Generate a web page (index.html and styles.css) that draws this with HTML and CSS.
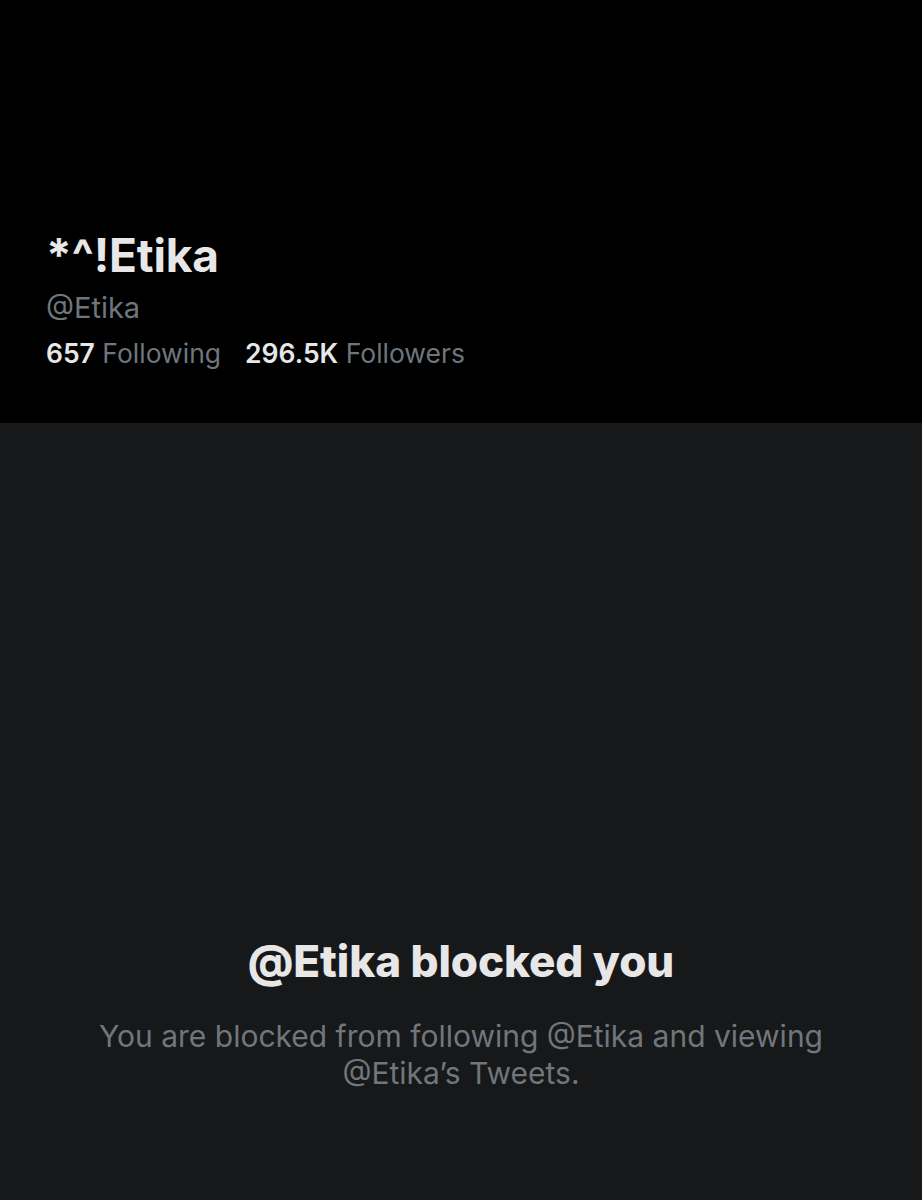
FILE: index.html
```html
<!DOCTYPE html>
<html lang="en">

<head>
    <meta charset="UTF-8">
    <meta name="viewport" content="width=device-width, initial-scale=1.0">
    <link rel="stylesheet" href="styles.css">
    <title>@Etika</title>
</head>

<body>

    <div class="profile-header">
        <h1 class="display-name">*^!Etika</h1>
        <div class="handle">@Etika</div>
        <div class="stats">
            <span class="stat"><b>657</b> Following</span>
            <span class="stat"><b>296.5K</b> Followers</span>
        </div>
    </div>

    <div class="blocked-area">
        <h2 class="blocked-title">@Etika blocked you</h2>
        <p class="blocked-text">You are blocked from following @Etika and viewing @Etika’s Tweets.</p>
    </div>

</body>

</html>
```

FILE: styles.css
```css
body {
    margin: 0;
    height: 1200px;
    background-color: #17181a;
    font-family: 'Inter', 'Liberation Sans', sans-serif;
    display: flex;
    flex-direction: column;
}

.profile-header {
    background-color: #000;
    height: 423px;
    box-sizing: border-box;
    padding: 228px 46px 0;
}

.display-name {
    margin: 0;
    color: #e7e7e7;
    font-size: 46px;
    font-weight: 700;
    line-height: 54px;
    letter-spacing: -0.2px;
}

.handle {
    margin-top: 9px;
    color: #6e767d;
    font-size: 29px;
    line-height: 34px;
}

.stats {
    margin-top: 10px;
    display: flex;
    gap: 24px;
    color: #6e767d;
    font-size: 26.5px;
    line-height: 36px;
}

.stats b {
    color: #e7e7e7;
    font-weight: 600;
}

.blocked-area {
    flex: 1;
    display: flex;
    flex-direction: column;
    align-items: center;
    padding-top: 506px;
}

.blocked-title {
    margin: 0;
    color: #e7e7e7;
    font-size: 44px;
    font-weight: 800;
    line-height: 64px;
    letter-spacing: -0.1px;
}

.blocked-text {
    margin: 25px 0 0;
    width: 800px;
    text-align: center;
    color: #71767b;
    font-size: 30px;
    line-height: 37px;
}
```
